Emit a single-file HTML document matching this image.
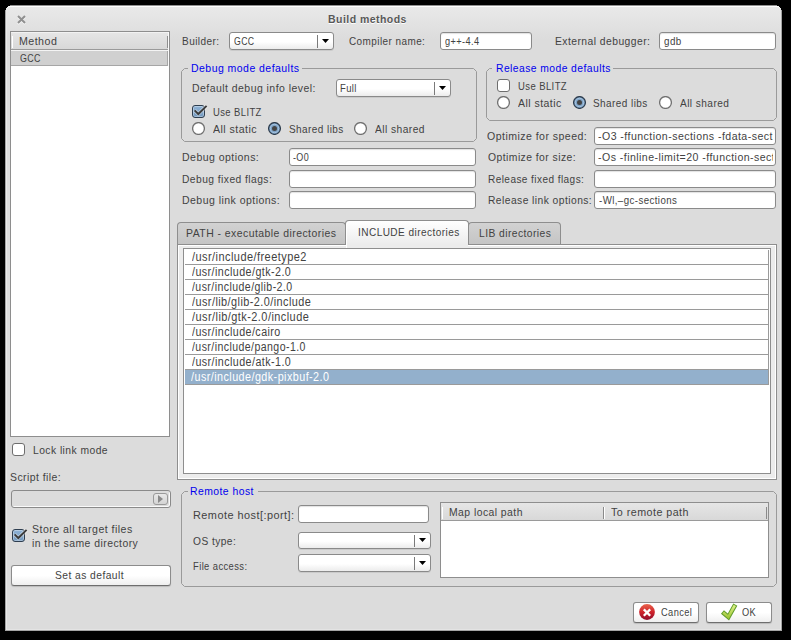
<!DOCTYPE html><html><head><meta charset="utf-8"><style>
html,body{margin:0;padding:0;}
body{width:791px;height:640px;background:#000;position:relative;overflow:hidden;font-family:"Liberation Sans",sans-serif;}
.t{position:absolute;white-space:pre;line-height:1;letter-spacing:0.5px;}
.s{display:inline-block;height:30px;width:0;vertical-align:baseline;}
</style></head><body>
<div style="position:absolute;left:5px;top:5px;width:777px;height:626px;background:#dcdcdc;clip-path:polygon(5px 0,772px 0,772px 1px,774px 1px,774px 2px,775px 2px,775px 3px,776px 3px,776px 5px,777px 5px,777px 626px,0 626px,0 5px,1px 5px,1px 3px,2px 3px,2px 2px,3px 2px,3px 1px,5px 1px);overflow:hidden;"><div style="position:absolute;left:0;top:0;width:777px;height:34px;background:linear-gradient(#eaeaea,#dcdcdc);"></div><div style="position:absolute;left:0;top:0;width:777px;height:626px;box-sizing:border-box;border:1px solid #a4a4a4;border-top-color:#909090;border-radius:4px 4px 0 0;box-shadow:inset 0 1px 0 #fdfdfd, inset 1px 0 0 #e8e8e8, inset -1px 0 0 #e4e4e4, inset 0 -1px 0 #e4e4e4;"></div></div>
<svg style="position:absolute;left:16px;top:13.5px" width="11" height="11"><path d="M2 2L9 9M9 2L2 9" stroke="#fff" stroke-opacity="0.7" stroke-width="2.2" transform="translate(0,1)"/><path d="M2 2L9 9M9 2L2 9" stroke="#909090" stroke-width="2"/></svg>
<div id="t0" class="t" style="left:328.24px;top:-7px;font-size:11.628px;color:#585858;font-weight:bold;transform:scaleX(0.9054);transform-origin:0 0;text-shadow:0 1px 0 #fff;"><i class="s"></i>Build methods</div>
<div style="position:absolute;left:10px;top:31px;width:160px;height:406px;box-sizing:border-box;border:1px solid #8e8e8e;background:#fff;"></div>
<div style="position:absolute;left:11px;top:32px;width:158px;height:18px;box-sizing:border-box;background:linear-gradient(#e6e6e6,#d8d8d8);border-bottom:1px solid #9a9a9a;"></div>
<div style="position:absolute;left:12px;top:36px;width:1px;height:12px;box-sizing:border-box;background:#fff;"></div>
<div style="position:absolute;left:167px;top:36px;width:1px;height:12px;box-sizing:border-box;background:#8e8e8e;"></div>
<div style="position:absolute;left:11px;top:50px;width:158px;height:1px;box-sizing:border-box;background:#f4f4f4;"></div>
<div style="position:absolute;left:11px;top:51px;width:158px;height:15px;box-sizing:border-box;background:#d0d0d0;border-bottom:1px solid #a6a6a6;"></div>
<div style="position:absolute;left:11px;top:32px;width:157px;height:1px;box-sizing:border-box;background:#f2f2f2;"></div>
<div style="position:absolute;left:168px;top:32px;width:1px;height:34px;box-sizing:border-box;background:#fafafa;"></div>
<div style="position:absolute;left:167px;top:51px;width:1px;height:15px;box-sizing:border-box;background:#a6a6a6;"></div>
<div id="t1" class="t" style="left:19.11px;top:15px;font-size:11.628px;color:#424242;font-weight:normal;transform:scaleX(0.9170);transform-origin:0 0;"><i class="s"></i>Method</div>
<div id="t2" class="t" style="left:19.54px;top:32px;font-size:11.628px;color:#424242;font-weight:normal;transform:scaleX(0.7644);transform-origin:0 0;"><i class="s"></i>GCC</div>
<div style="position:absolute;left:12px;top:443px;width:13px;height:13px;box-sizing:border-box;border:1px solid #6e6e6e;border-radius:3px;background:#fff;"></div>
<div id="t3" class="t" style="left:32.55px;top:424px;font-size:11.628px;color:#424242;font-weight:normal;transform:scaleX(0.8887);transform-origin:0 0;"><i class="s"></i>Lock link mode</div>
<div id="t4" class="t" style="left:10.46px;top:451px;font-size:11.628px;color:#424242;font-weight:normal;transform:scaleX(0.8986);transform-origin:0 0;"><i class="s"></i>Script file:</div>
<div style="position:absolute;left:11px;top:490px;width:160px;height:18px;box-sizing:border-box;border:1px solid #8a8a8a;border-radius:3px;background:#dcdcdc;box-shadow:inset -1px -1px 0 #fafafa;"></div>
<div style="position:absolute;left:153px;top:493px;width:15px;height:12px;box-sizing:border-box;border:1px solid #9a9a9a;border-radius:3px;background:linear-gradient(#e8e8e8,#d4d4d4);"></div>
<svg style="position:absolute;left:158px;top:495px" width="6" height="8"><path d="M0 0L5 4L0 8Z" fill="#8a8a8a"/></svg>
<div style="position:absolute;left:12px;top:529px;width:13px;height:13px;box-sizing:border-box;border:1px solid #2e3e50;border-radius:3px;background:linear-gradient(#8fb3d6,#7097be);box-shadow:inset 0 0 0 1px rgba(255,255,255,0.35);"></div>
<svg style="position:absolute;left:12px;top:527px" width="16" height="16"><path d="M2.6 7.4L6.3 11L14.6 2.9" stroke="#fff" stroke-opacity="0.45" stroke-width="3.6" fill="none"/><path d="M2.6 7.4L6.3 11L14.6 2.9" stroke="#3c3c3c" stroke-width="2.0" fill="none"/></svg>
<div id="t5" class="t" style="left:32.45px;top:503px;font-size:11.628px;color:#424242;font-weight:normal;transform:scaleX(0.9120);transform-origin:0 0;"><i class="s"></i>Store all target files</div>
<div id="t6" class="t" style="left:32.48px;top:517px;font-size:11.628px;color:#424242;font-weight:normal;transform:scaleX(0.8985);transform-origin:0 0;"><i class="s"></i>in the same directory</div>
<div style="position:absolute;left:11px;top:565px;width:160px;height:21px;box-sizing:border-box;border:1px solid #8c8c8c;border-bottom-color:#6e6e6e;border-radius:3px;background:linear-gradient(#fff 50%,#efefef);box-shadow:0 1px 1px rgba(0,0,0,0.15);"></div>
<div id="t7" class="t" style="left:55.24px;top:549px;font-size:11.628px;color:#424242;font-weight:normal;transform:scaleX(0.8848);transform-origin:0 0;"><i class="s"></i>Set as default</div>
<div id="t8" class="t" style="left:181.87px;top:15px;font-size:11.628px;color:#424242;font-weight:normal;transform:scaleX(0.8653);transform-origin:0 0;"><i class="s"></i>Builder:</div>
<div style="position:absolute;left:229px;top:32px;width:105px;height:18px;box-sizing:border-box;border:1px solid #8a8a8a;border-radius:3px;background:linear-gradient(#fff 55%,#ececec);box-shadow:0 1px 0 rgba(0,0,0,0.08);"></div>
<div style="position:absolute;left:317px;top:35px;width:1px;height:13px;box-sizing:border-box;background:#7a7a7a;"></div>
<svg style="position:absolute;left:322px;top:39px" width="7" height="4"><path d="M0 0H7L3.5 4Z" fill="#000"/></svg>
<div id="t9" class="t" style="left:233.6px;top:15px;font-size:11.628px;color:#424242;font-weight:normal;transform:scaleX(0.7503);transform-origin:0 0;"><i class="s"></i>GCC</div>
<div id="t10" class="t" style="left:349.32px;top:15px;font-size:11.628px;color:#424242;font-weight:normal;transform:scaleX(0.8579);transform-origin:0 0;"><i class="s"></i>Compiler name:</div>
<div style="position:absolute;left:440px;top:32px;width:92px;height:18px;box-sizing:border-box;border:1px solid #8a8a8a;border-radius:3px;background:#fff;box-shadow:inset 0 1px 1px rgba(0,0,0,0.12);"></div>
<div id="t11" class="t" style="left:445.45px;top:15px;font-size:11.628px;color:#424242;font-weight:normal;transform:scaleX(0.7925);transform-origin:0 0;"><i class="s"></i>g++-4.4</div>
<div id="t12" class="t" style="left:555.18px;top:15px;font-size:11.628px;color:#424242;font-weight:normal;transform:scaleX(0.8904);transform-origin:0 0;"><i class="s"></i>External debugger:</div>
<div style="position:absolute;left:659px;top:32px;width:117px;height:18px;box-sizing:border-box;border:1px solid #8a8a8a;border-radius:3px;background:#fff;box-shadow:inset 0 1px 1px rgba(0,0,0,0.12);"></div>
<div id="t13" class="t" style="left:664.27px;top:15px;font-size:11.628px;color:#424242;font-weight:normal;transform:scaleX(0.8464);transform-origin:0 0;"><i class="s"></i>gdb</div>
<svg style="position:absolute;left:181px;top:68px" width="296" height="74"><path d="M7 0.5H3.5L0.5 3.5V70.5L3.5 73.5H292.5L295.5 70.5V3.5L292.5 0.5H121" fill="none" stroke="#9a9a9a" stroke-width="1"/></svg>
<div id="t14" class="t" style="left:190.62px;top:42px;font-size:11.628px;color:#0000ee;font-weight:normal;transform:scaleX(0.9050);transform-origin:0 0;"><i class="s"></i>Debug mode defaults</div>
<div id="t15" class="t" style="left:191.75px;top:62px;font-size:11.628px;color:#424242;font-weight:normal;transform:scaleX(0.9038);transform-origin:0 0;"><i class="s"></i>Default debug info level:</div>
<div style="position:absolute;left:336px;top:79px;width:115px;height:18px;box-sizing:border-box;border:1px solid #8a8a8a;border-radius:3px;background:linear-gradient(#fff 55%,#ececec);box-shadow:0 1px 0 rgba(0,0,0,0.08);"></div>
<div style="position:absolute;left:434px;top:82px;width:1px;height:13px;box-sizing:border-box;background:#7a7a7a;"></div>
<svg style="position:absolute;left:439px;top:86px" width="7" height="4"><path d="M0 0H7L3.5 4Z" fill="#000"/></svg>
<div id="t16" class="t" style="left:340.15px;top:62px;font-size:11.628px;color:#424242;font-weight:normal;transform:scaleX(0.8139);transform-origin:0 0;"><i class="s"></i>Full</div>
<div style="position:absolute;left:192px;top:105px;width:13px;height:13px;box-sizing:border-box;border:1px solid #2e3e50;border-radius:3px;background:linear-gradient(#8fb3d6,#7097be);box-shadow:inset 0 0 0 1px rgba(255,255,255,0.35);"></div>
<svg style="position:absolute;left:192px;top:103px" width="16" height="16"><path d="M2.6 7.4L6.3 11L14.6 2.9" stroke="#fff" stroke-opacity="0.45" stroke-width="3.6" fill="none"/><path d="M2.6 7.4L6.3 11L14.6 2.9" stroke="#3c3c3c" stroke-width="2.0" fill="none"/></svg>
<div id="t17" class="t" style="left:212.61px;top:86px;font-size:11.628px;color:#424242;font-weight:normal;transform:scaleX(0.8136);transform-origin:0 0;"><i class="s"></i>Use BLITZ</div>
<svg style="position:absolute;left:192px;top:122px" width="13" height="13"><circle cx="6.5" cy="6.5" r="5.9" fill="#fff" stroke="#707070" stroke-width="1.3"/></svg>
<div id="t18" class="t" style="left:212.95px;top:103px;font-size:11.628px;color:#424242;font-weight:normal;transform:scaleX(0.9137);transform-origin:0 0;"><i class="s"></i>All static</div>
<svg style="position:absolute;left:268px;top:122px" width="13" height="13"><circle cx="6.5" cy="6.5" r="5.9" fill="#7ea2c5" stroke="#2c3a4a" stroke-width="1.25"/><circle cx="6.5" cy="6.5" r="4.2" fill="none" stroke="#a6c4e0" stroke-width="1"/><circle cx="6.5" cy="6.5" r="2.5" fill="#444"/></svg>
<div id="t19" class="t" style="left:288.68px;top:103px;font-size:11.628px;color:#424242;font-weight:normal;transform:scaleX(0.8606);transform-origin:0 0;"><i class="s"></i>Shared libs</div>
<svg style="position:absolute;left:354px;top:122px" width="13" height="13"><circle cx="6.5" cy="6.5" r="5.9" fill="#fff" stroke="#707070" stroke-width="1.3"/></svg>
<div id="t20" class="t" style="left:374.73px;top:103px;font-size:11.628px;color:#424242;font-weight:normal;transform:scaleX(0.8826);transform-origin:0 0;"><i class="s"></i>All shared</div>
<svg style="position:absolute;left:486px;top:68px" width="291" height="53"><path d="M6 0.5H3.5L0.5 3.5V49.5L3.5 52.5H287.5L290.5 49.5V3.5L287.5 0.5H127" fill="none" stroke="#9a9a9a" stroke-width="1"/></svg>
<div id="t21" class="t" style="left:495.75px;top:42px;font-size:11.628px;color:#0000ee;font-weight:normal;transform:scaleX(0.8881);transform-origin:0 0;"><i class="s"></i>Release mode defaults</div>
<div style="position:absolute;left:497px;top:79px;width:13px;height:13px;box-sizing:border-box;border:1px solid #6e6e6e;border-radius:3px;background:#fff;"></div>
<div id="t22" class="t" style="left:517.61px;top:60px;font-size:11.628px;color:#424242;font-weight:normal;transform:scaleX(0.8177);transform-origin:0 0;"><i class="s"></i>Use BLITZ</div>
<svg style="position:absolute;left:497px;top:96px" width="13" height="13"><circle cx="6.5" cy="6.5" r="5.9" fill="#fff" stroke="#707070" stroke-width="1.3"/></svg>
<div id="t23" class="t" style="left:518.04px;top:77px;font-size:11.628px;color:#424242;font-weight:normal;transform:scaleX(0.9071);transform-origin:0 0;"><i class="s"></i>All static</div>
<svg style="position:absolute;left:573px;top:96px" width="13" height="13"><circle cx="6.5" cy="6.5" r="5.9" fill="#7ea2c5" stroke="#2c3a4a" stroke-width="1.25"/><circle cx="6.5" cy="6.5" r="4.2" fill="none" stroke="#a6c4e0" stroke-width="1"/><circle cx="6.5" cy="6.5" r="2.5" fill="#444"/></svg>
<div id="t24" class="t" style="left:593.08px;top:77px;font-size:11.628px;color:#424242;font-weight:normal;transform:scaleX(0.8606);transform-origin:0 0;"><i class="s"></i>Shared libs</div>
<svg style="position:absolute;left:659px;top:96px" width="13" height="13"><circle cx="6.5" cy="6.5" r="5.9" fill="#fff" stroke="#707070" stroke-width="1.3"/></svg>
<div id="t25" class="t" style="left:679.7px;top:77px;font-size:11.628px;color:#424242;font-weight:normal;transform:scaleX(0.8706);transform-origin:0 0;"><i class="s"></i>All shared</div>
<div id="t26" class="t" style="left:181.71px;top:131px;font-size:11.628px;color:#424242;font-weight:normal;transform:scaleX(0.9078);transform-origin:0 0;"><i class="s"></i>Debug options:</div>
<div id="t27" class="t" style="left:181.75px;top:153px;font-size:11.628px;color:#424242;font-weight:normal;transform:scaleX(0.8851);transform-origin:0 0;"><i class="s"></i>Debug fixed flags:</div>
<div id="t28" class="t" style="left:181.71px;top:174px;font-size:11.628px;color:#424242;font-weight:normal;transform:scaleX(0.9074);transform-origin:0 0;"><i class="s"></i>Debug link options:</div>
<div style="position:absolute;left:289px;top:148px;width:187px;height:18px;box-sizing:border-box;border:1px solid #8a8a8a;border-radius:3px;background:#fff;box-shadow:inset 0 1px 1px rgba(0,0,0,0.12);"></div>
<div id="t29" class="t" style="left:293.29px;top:131px;font-size:11.628px;color:#424242;font-weight:normal;transform:scaleX(0.7729);transform-origin:0 0;"><i class="s"></i>-O0</div>
<div style="position:absolute;left:289px;top:170px;width:187px;height:18px;box-sizing:border-box;border:1px solid #8a8a8a;border-radius:3px;background:#fff;box-shadow:inset 0 1px 1px rgba(0,0,0,0.12);"></div>
<div style="position:absolute;left:289px;top:191px;width:187px;height:18px;box-sizing:border-box;border:1px solid #8a8a8a;border-radius:3px;background:#fff;box-shadow:inset 0 1px 1px rgba(0,0,0,0.12);"></div>
<div id="t30" class="t" style="left:487.48px;top:110px;font-size:11.628px;color:#424242;font-weight:normal;transform:scaleX(0.9101);transform-origin:0 0;"><i class="s"></i>Optimize for speed:</div>
<div id="t31" class="t" style="left:487.51px;top:131px;font-size:11.628px;color:#424242;font-weight:normal;transform:scaleX(0.8928);transform-origin:0 0;"><i class="s"></i>Optimize for size:</div>
<div id="t32" class="t" style="left:487.65px;top:153px;font-size:11.628px;color:#424242;font-weight:normal;transform:scaleX(0.8653);transform-origin:0 0;"><i class="s"></i>Release fixed flags:</div>
<div id="t33" class="t" style="left:487.55px;top:174px;font-size:11.628px;color:#424242;font-weight:normal;transform:scaleX(0.8856);transform-origin:0 0;"><i class="s"></i>Release link options:</div>
<div style="position:absolute;left:594px;top:127px;width:182px;height:18px;box-sizing:border-box;border:1px solid #8a8a8a;border-radius:3px;background:#fff;box-shadow:inset 0 1px 1px rgba(0,0,0,0.12);"></div>
<div style="position:absolute;left:594px;top:148px;width:182px;height:18px;box-sizing:border-box;border:1px solid #8a8a8a;border-radius:3px;background:#fff;box-shadow:inset 0 1px 1px rgba(0,0,0,0.12);"></div>
<div style="position:absolute;left:594px;top:170px;width:182px;height:18px;box-sizing:border-box;border:1px solid #8a8a8a;border-radius:3px;background:#fff;box-shadow:inset 0 1px 1px rgba(0,0,0,0.12);"></div>
<div style="position:absolute;left:594px;top:191px;width:182px;height:18px;box-sizing:border-box;border:1px solid #8a8a8a;border-radius:3px;background:#fff;box-shadow:inset 0 1px 1px rgba(0,0,0,0.12);"></div>
<div style="position:absolute;left:595px;top:128px;width:178px;height:80px;overflow:hidden;">
<div id="t34" class="t" style="left:2.5px;top:-18px;font-size:11.628px;color:#424242;font-weight:normal;transform:scaleX(0.91);transform-origin:0 0;"><i class="s"></i>-O3 -ffunction-sections -fdata-sections</div>
<div id="t35" class="t" style="left:2.5px;top:3px;font-size:11.628px;color:#424242;font-weight:normal;transform:scaleX(0.91);transform-origin:0 0;"><i class="s"></i>-Os -finline-limit=20 -ffunction-sections</div>
</div>
<div id="t36" class="t" style="left:598.69px;top:174px;font-size:11.628px;color:#424242;font-weight:normal;transform:scaleX(0.8341);transform-origin:0 0;"><i class="s"></i>-Wl,–gc-sections</div>
<div style="position:absolute;left:177px;top:222px;width:169px;height:23px;box-sizing:border-box;border:1px solid #8e8e8e;border-bottom:none;border-radius:4px 4px 0 0;background:linear-gradient(#d2d2d2,#c4c4c4);"></div>
<div style="position:absolute;left:468px;top:222px;width:93px;height:23px;box-sizing:border-box;border:1px solid #8e8e8e;border-bottom:none;border-radius:4px 4px 0 0;background:linear-gradient(#d2d2d2,#c4c4c4);"></div>
<div style="position:absolute;left:177px;top:244px;width:600px;height:236px;box-sizing:border-box;border:1px solid #8e8e8e;background:#ececec;box-shadow:inset 1px 1px 0 #fff, inset -1px -1px 0 #fff;"></div>
<div style="position:absolute;left:345px;top:220px;width:124px;height:25px;box-sizing:border-box;border:1px solid #8e8e8e;border-bottom:none;border-radius:4px 4px 0 0;background:linear-gradient(#fff,#ececec);box-shadow:inset 1px 1px 0 #fff;"></div>
<div style="position:absolute;left:346px;top:244px;width:122px;height:4px;box-sizing:border-box;background:#ececec;border-left:1px solid #fff;"></div>
<div id="t37" class="t" style="left:186.45px;top:207px;font-size:11.628px;color:#424242;font-weight:normal;transform:scaleX(0.9005);transform-origin:0 0;"><i class="s"></i>PATH - executable directories</div>
<div id="t38" class="t" style="left:357.69px;top:206px;font-size:11.628px;color:#424242;font-weight:normal;transform:scaleX(0.8671);transform-origin:0 0;"><i class="s"></i>INCLUDE directories</div>
<div id="t39" class="t" style="left:478.95px;top:207px;font-size:11.628px;color:#424242;font-weight:normal;transform:scaleX(0.8853);transform-origin:0 0;"><i class="s"></i>LIB directories</div>
<div style="position:absolute;left:183px;top:248px;width:588px;height:226px;box-sizing:border-box;border:1px solid #8e8e8e;background:#fff;"></div>
<div style="position:absolute;left:185px;top:264px;width:584px;height:1px;box-sizing:border-box;background:#9a9a9a;"></div>
<div id="t40" class="t" style="left:191.85px;top:231px;font-size:12.24px;color:#424242;font-weight:normal;transform:scaleX(0.8969);transform-origin:0 0;"><i class="s"></i>/usr/include/freetype2</div>
<div style="position:absolute;left:185px;top:279px;width:584px;height:1px;box-sizing:border-box;background:#9a9a9a;"></div>
<div id="t41" class="t" style="left:191.84px;top:246px;font-size:12.24px;color:#424242;font-weight:normal;transform:scaleX(0.8749);transform-origin:0 0;"><i class="s"></i>/usr/include/gtk-2.0</div>
<div style="position:absolute;left:185px;top:294px;width:584px;height:1px;box-sizing:border-box;background:#9a9a9a;"></div>
<div id="t42" class="t" style="left:191.83px;top:261px;font-size:12.24px;color:#424242;font-weight:normal;transform:scaleX(0.8627);transform-origin:0 0;"><i class="s"></i>/usr/include/glib-2.0</div>
<div style="position:absolute;left:185px;top:309px;width:584px;height:1px;box-sizing:border-box;background:#9a9a9a;"></div>
<div id="t43" class="t" style="left:191.85px;top:276px;font-size:12.24px;color:#424242;font-weight:normal;transform:scaleX(0.8891);transform-origin:0 0;"><i class="s"></i>/usr/lib/glib-2.0/include</div>
<div style="position:absolute;left:185px;top:324px;width:584px;height:1px;box-sizing:border-box;background:#9a9a9a;"></div>
<div id="t44" class="t" style="left:191.85px;top:291px;font-size:12.24px;color:#424242;font-weight:normal;transform:scaleX(0.8946);transform-origin:0 0;"><i class="s"></i>/usr/lib/gtk-2.0/include</div>
<div style="position:absolute;left:185px;top:339px;width:584px;height:1px;box-sizing:border-box;background:#9a9a9a;"></div>
<div id="t45" class="t" style="left:191.85px;top:306px;font-size:12.24px;color:#424242;font-weight:normal;transform:scaleX(0.8745);transform-origin:0 0;"><i class="s"></i>/usr/include/cairo</div>
<div style="position:absolute;left:185px;top:354px;width:584px;height:1px;box-sizing:border-box;background:#9a9a9a;"></div>
<div id="t46" class="t" style="left:191.83px;top:321px;font-size:12.24px;color:#424242;font-weight:normal;transform:scaleX(0.8619);transform-origin:0 0;"><i class="s"></i>/usr/include/pango-1.0</div>
<div style="position:absolute;left:185px;top:369px;width:584px;height:1px;box-sizing:border-box;background:#9a9a9a;"></div>
<div id="t47" class="t" style="left:191.84px;top:336px;font-size:12.24px;color:#424242;font-weight:normal;transform:scaleX(0.8749);transform-origin:0 0;"><i class="s"></i>/usr/include/atk-1.0</div>
<div style="position:absolute;left:185px;top:370px;width:584px;height:15px;box-sizing:border-box;background:#93b0cc;border-bottom:1px solid #9a9a9a;"></div>
<div id="t48" class="t" style="left:191.39px;top:351px;font-size:12.24px;color:#fff;font-weight:normal;transform:scaleX(0.8817);transform-origin:0 0;"><i class="s"></i>/usr/include/gdk-pixbuf-2.0</div>
<div style="position:absolute;left:768px;top:250px;width:1px;height:135px;box-sizing:border-box;background:#9a9a9a;"></div>
<svg style="position:absolute;left:181px;top:491px" width="596" height="96"><path d="M7 0.5H3.5L0.5 3.5V92.5L3.5 95.5H592.5L595.5 92.5V3.5L592.5 0.5H77" fill="none" stroke="#9a9a9a" stroke-width="1"/></svg>
<div id="t49" class="t" style="left:190.44px;top:465px;font-size:11.628px;color:#0000ee;font-weight:normal;transform:scaleX(0.8959);transform-origin:0 0;"><i class="s"></i>Remote host</div>
<div id="t50" class="t" style="left:192.52px;top:489px;font-size:11.628px;color:#424242;font-weight:normal;transform:scaleX(0.9387);transform-origin:0 0;"><i class="s"></i>Remote host[:port]:</div>
<div style="position:absolute;left:298px;top:505px;width:131px;height:18px;box-sizing:border-box;border:1px solid #8a8a8a;border-radius:3px;background:#fff;box-shadow:inset 0 1px 1px rgba(0,0,0,0.12);"></div>
<div id="t51" class="t" style="left:193.3px;top:515px;font-size:11.628px;color:#424242;font-weight:normal;transform:scaleX(0.8792);transform-origin:0 0;"><i class="s"></i>OS type:</div>
<div style="position:absolute;left:298px;top:532px;width:133px;height:17px;box-sizing:border-box;border:1px solid #8a8a8a;border-radius:3px;background:linear-gradient(#fff 55%,#ececec);box-shadow:0 1px 0 rgba(0,0,0,0.08);"></div>
<div style="position:absolute;left:414px;top:535px;width:1px;height:12px;box-sizing:border-box;background:#7a7a7a;"></div>
<svg style="position:absolute;left:419px;top:538px" width="7" height="4"><path d="M0 0H7L3.5 4Z" fill="#000"/></svg>
<div id="t52" class="t" style="left:193.19px;top:540px;font-size:11.628px;color:#424242;font-weight:normal;transform:scaleX(0.8086);transform-origin:0 0;"><i class="s"></i>File access:</div>
<div style="position:absolute;left:298px;top:554px;width:133px;height:18px;box-sizing:border-box;border:1px solid #8a8a8a;border-radius:3px;background:linear-gradient(#fff 55%,#ececec);box-shadow:0 1px 0 rgba(0,0,0,0.08);"></div>
<div style="position:absolute;left:414px;top:557px;width:1px;height:13px;box-sizing:border-box;background:#7a7a7a;"></div>
<svg style="position:absolute;left:419px;top:561px" width="7" height="4"><path d="M0 0H7L3.5 4Z" fill="#000"/></svg>
<div style="position:absolute;left:440px;top:502px;width:329px;height:76px;box-sizing:border-box;border:1px solid #8e8e8e;background:#fff;"></div>
<div style="position:absolute;left:441px;top:503px;width:327px;height:18px;box-sizing:border-box;background:linear-gradient(#e6e6e6,#d8d8d8);border-bottom:1px solid #9a9a9a;"></div>
<div style="position:absolute;left:442px;top:507px;width:1px;height:12px;box-sizing:border-box;background:#fff;"></div>
<div style="position:absolute;left:603px;top:507px;width:1px;height:12px;box-sizing:border-box;background:#8a8a8a;"></div>
<div style="position:absolute;left:604px;top:507px;width:1px;height:12px;box-sizing:border-box;background:#fff;"></div>
<div style="position:absolute;left:766px;top:507px;width:1px;height:12px;box-sizing:border-box;background:#8a8a8a;"></div>
<div id="t53" class="t" style="left:449.27px;top:486px;font-size:11.628px;color:#424242;font-weight:normal;transform:scaleX(0.8954);transform-origin:0 0;"><i class="s"></i>Map local path</div>
<div id="t54" class="t" style="left:611.32px;top:486px;font-size:11.628px;color:#424242;font-weight:normal;transform:scaleX(0.9231);transform-origin:0 0;"><i class="s"></i>To remote path</div>
<div style="position:absolute;left:633px;top:602px;width:66px;height:21px;box-sizing:border-box;border:1px solid #8c8c8c;border-bottom-color:#6e6e6e;border-radius:3px;background:linear-gradient(#fff 50%,#efefef);box-shadow:0 1px 1px rgba(0,0,0,0.15);"></div>
<svg style="position:absolute;left:638px;top:603px" width="18" height="18"><defs><linearGradient id="rg" x1="0" y1="0" x2="0" y2="1"><stop offset="0" stop-color="#e8644c"/><stop offset="0.5" stop-color="#d0242c"/><stop offset="1" stop-color="#8e0c2c"/></linearGradient></defs><circle cx="9" cy="9" r="7.9" fill="url(#rg)"/><path d="M5.8 6.4L12.2 12.8M12.2 6.4L5.8 12.8" stroke="#fff" stroke-width="2.3"/></svg>
<div id="t55" class="t" style="left:660.76px;top:586px;font-size:11.628px;color:#424242;font-weight:normal;transform:scaleX(0.7991);transform-origin:0 0;"><i class="s"></i>Cancel</div>
<div style="position:absolute;left:706px;top:602px;width:66px;height:21px;box-sizing:border-box;border:1px solid #8c8c8c;border-bottom-color:#6e6e6e;border-radius:3px;background:linear-gradient(#fff 50%,#efefef);box-shadow:0 1px 1px rgba(0,0,0,0.15);"></div>
<svg style="position:absolute;left:720px;top:603px" width="18" height="18"><defs><linearGradient id="gg" x1="0" y1="0" x2="0" y2="1"><stop offset="0" stop-color="#d8ee80"/><stop offset="1" stop-color="#a2c83a"/></linearGradient></defs><path d="M4.2 10.4L8.4 14L14.2 3.6" stroke="#5f9c2a" stroke-width="4.6" fill="none" stroke-linecap="square"/><path d="M4.2 10.4L8.4 14L14.2 3.6" stroke="url(#gg)" stroke-width="2.6" fill="none" stroke-linecap="square"/></svg>
<div id="t56" class="t" style="left:742.38px;top:586px;font-size:11.628px;color:#424242;font-weight:normal;transform:scaleX(0.7953);transform-origin:0 0;"><i class="s"></i>OK</div>
</body></html>
